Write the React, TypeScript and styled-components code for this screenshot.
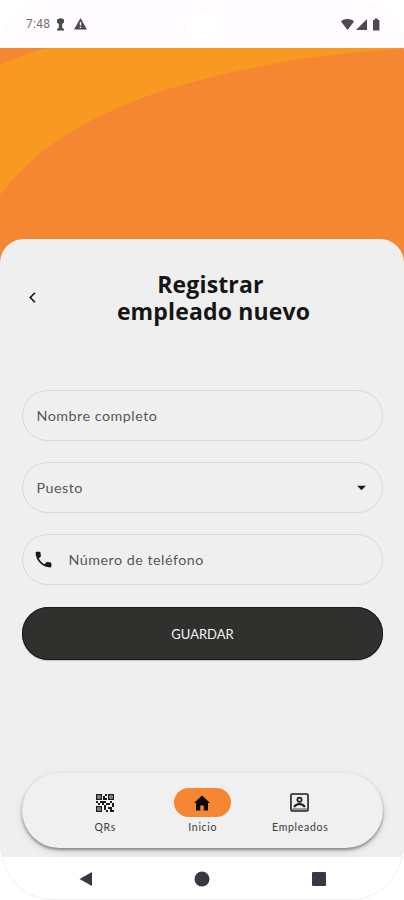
import React from 'react';
import styled, { createGlobalStyle } from 'styled-components';
import { MdPhone, MdArrowDropDown, MdQrCode2 } from 'react-icons/md';

const GlobalStyle = createGlobalStyle`
  *, *::before, *::after { box-sizing: border-box; }
  body { margin: 0; background: #ffffff; }
  button { font: inherit; margin: 0; padding: 0; border: 0; background: none; }
`;

const Device = styled.div`
  width: 404px;
  height: 900px;
  display: flex;
  flex-direction: column;
  overflow: hidden;
  border-radius: 56px 56px 52px 52px / 52px 52px 56px 56px;
  box-shadow: inset 0 0 0 1px #f1f0f1;
  background: #ffffff;
  font-family: Lato, sans-serif;
  color: #1c1c1c;
`;

const StatusBar = styled.header`
  flex: none;
  height: 48px;
  display: grid;
  grid-template-columns: 1fr 30px 1fr;
  align-items: center;
  background: #fffbff;
`;

const StatusLeft = styled.div`
  display: flex;
  align-items: center;
  padding-left: 26px;
  color: #4b4a4c;
`;

const Clock = styled.span`
  width: 30px;
  font: 400 12px/16px Roboto, sans-serif;
  letter-spacing: 0.3px;
  color: #747174;
`;

const Notifications = styled.div`
  display: flex;
  align-items: center;
  gap: 9px;
`;

const StatusRight = styled.div`
  display: flex;
  justify-content: flex-end;
  align-items: center;
  padding-right: 23px;
  color: #4b4a4c;
`;

const Camera = styled.div`
  width: 30px;
  height: 30px;
  margin-top: 6px;
  margin-left: 1px;
  border-radius: 50%;
  background: #ffffff;
`;

const Banner = styled.div`
  flex: none;
  height: 218px;
  background: #f68732;

  svg { display: block; }
`;

const Sheet = styled.main`
  flex: none;
  height: 618px;
  margin-top: -27px;
  padding: 31px 21px 0 22px;
  display: flex;
  flex-direction: column;
  border-radius: 24px 24px 0 0;
  background: #efefef;
  position: relative;
`;

const TitleRow = styled.div`
  height: 56px;
  display: grid;
  grid-template-columns: 22px 1fr;
  align-items: center;
`;

const BackButton = styled.button`
  width: 21px;
  height: 22px;
  margin-top: -2px;
  display: flex;
  align-items: center;
  justify-content: center;
  color: #111111;
`;

const Title = styled.h1`
  width: 210px;
  margin: 0;
  justify-self: center;
  text-align: center;
  white-space: pre-line;
  font: 700 23px/27px "Open Sans", sans-serif;
  letter-spacing: 0.15px;
  color: #151515;
`;

const Form = styled.form`
  display: flex;
  flex-direction: column;
  gap: 21px;
  margin-top: 64px;
`;

const Field = styled.div`
  height: 51px;
  padding: 0 10px 0 13px;
  display: flex;
  align-items: center;
  border: 1px solid #d7d7d7;
  border-radius: 26px;
`;

const FieldIcon = styled.span`
  width: 35px;
  display: flex;
  margin-left: -3px;
  color: #17171c;
`;

const Placeholder = styled.span`
  flex: 1;
  padding-left: 0.5px;
  font-size: 14.3px;
  line-height: 20px;
  letter-spacing: 0.5px;
  color: #575757;
`;

const SaveButton = styled.button`
  height: 53px;
  margin-top: 1px;
  border-radius: 27px;
  background: #30302e;
  box-shadow: inset 0 0 0 1px #1b1b1a, 0 1px 1px rgba(0, 0, 0, 0.2);
  && { font: 400 13px/18px Lato, sans-serif; }
  color: #f3f3f3;
`;

const TabBar = styled.nav`
  height: 75px;
  margin-top: 113px;
  padding: 15px 34px 0;
  display: grid;
  grid-template-columns: repeat(3, 97.5px);
  border-radius: 38px;
  background: #f0f0f0;
  box-shadow: 0 2px 3px rgba(0, 0, 0, 0.38), 0 3px 8px rgba(0, 0, 0, 0.12);
`;

const Tab = styled.button`
  display: flex;
  flex-direction: column;
  align-items: center;
`;

const TabIcon = styled.span<{ $active?: boolean }>`
  width: 57px;
  height: 29px;
  display: flex;
  align-items: center;
  justify-content: center;
  border-radius: 15px;
  background: ${(p) => (p.$active ? '#f68732' : 'transparent')};
  color: ${(p) => (p.$active ? '#0c0907' : '#1c1c1c')};
`;

const TabLabel = styled.span`
  margin-top: 3px;
  padding-left: 1px;
  font: 400 10.5px/14px Lato, sans-serif;
  letter-spacing: 0.7px;
  color: #3c3c3c;
`;

const SystemBar = styled.footer`
  flex: none;
  height: 43px;
  padding: 0 27px 0 28px;
  display: grid;
  grid-template-columns: repeat(3, 1fr);
  justify-items: center;
  align-items: center;
  color: #363844;
`;

const KeyholeIcon = () => (
  <svg width="9" height="13" viewBox="0 0 9 13" fill="currentColor">
    <path d="M4.500 0 8 1.500v3L6.200 6v4L8 11v1.500H1V11l1.800-1V6L1 4.500v-3z" />
  </svg>
);

const WarningIcon = () => (
  <svg width="13" height="12" viewBox="0 0 13 12" fill="currentColor">
    <path fillRule="evenodd" d="M6.5 0 13 11.5H0zM5.8 4v3.6h1.4V4zm0 4.7v1.4h1.4V8.7z" />
  </svg>
);

const StatusIcons = () => (
  <svg width="40" height="13" viewBox="0 0 40 13" fill="currentColor">
    <path d="M0 3.500C3.500.3 9.500.3 13 3.500L6.500 12z" />
    <path d="M26 1v11H15z" />
    <path d="M32 2H33.700V.5h3V2h1.700v10.500H32z" />
  </svg>
);

const HomeIcon = () => (
  <svg width="18" height="16" viewBox="0 0 18 16" fill="currentColor">
    <path d="M9 .5 17 8h-2v7.500h-4.300v-5H7.300v5H3V8H1z" />
  </svg>
);

const PortraitIcon = () => (
  <svg width="19" height="19" viewBox="0 0 18 18" fill="none" stroke="currentColor">
    <rect x=".9" y=".9" width="16.200" height="16.200" rx="1.300" strokeWidth="1.500" />
    <circle cx="9" cy="6.400" r="2" strokeWidth="1.600" />
    <path d="M4 13.400c1-2.100 2.900-3 5-3s4 .9 5 3" strokeWidth="2" />
    <path d="M2 15.200h14" strokeWidth=".8" />
  </svg>
);

const tabs = [
  { label: 'QRs', icon: <MdQrCode2 size={24} /> },
  { label: 'Inicio', icon: <HomeIcon />, active: true },
  { label: 'Empleados', icon: <PortraitIcon /> },
];

export default function App() {
  return (
    <Device>
      <GlobalStyle />
      <StatusBar>
        <StatusLeft>
          <Clock>7:48</Clock>
          <Notifications>
            <KeyholeIcon />
            <WarningIcon />
          </Notifications>
        </StatusLeft>
        <Camera />
        <StatusRight>
          <StatusIcons />
        </StatusRight>
      </StatusBar>
      <Banner>
        <svg width="404" height="218" viewBox="0 0 404 218">
          <path
            d="M0 17C14 10 30 4 50 0H404C384 2 360 4 340 6C285 11 224 25 165 42C90 67 37 98 0 147z"
            fill="#f89a22"
          />
        </svg>
      </Banner>
      <Sheet>
        <TitleRow>
          <BackButton aria-label="Volver">
            <svg width="7" height="11" viewBox="0 0 7 11" fill="none">
              <path d="M6 .8 1.300 5.500 6 10.200" stroke="currentColor" strokeWidth="1.600" />
            </svg>
          </BackButton>
          <Title>{'Registrar\u00a0\nempleado nuevo'}</Title>
        </TitleRow>
        <Form>
          <Field>
            <Placeholder>Nombre completo</Placeholder>
          </Field>
          <Field>
            <Placeholder>Puesto</Placeholder>
            <MdArrowDropDown size={21} color="#17171c" />
          </Field>
          <Field>
            <FieldIcon>
              <MdPhone size={21} />
            </FieldIcon>
            <Placeholder>Número de teléfono</Placeholder>
          </Field>
          <SaveButton type="button">GUARDAR</SaveButton>
        </Form>
        <TabBar>
          {tabs.map((tab) => (
            <Tab key={tab.label}>
              <TabIcon $active={tab.active}>{tab.icon}</TabIcon>
              <TabLabel>{tab.label}</TabLabel>
            </Tab>
          ))}
        </TabBar>
      </Sheet>
      <SystemBar>
        <svg width="14" height="16" viewBox="0 0 14 16">
          <path d="M13 1v14L.5 8z" fill="currentColor" />
        </svg>
        <svg width="16" height="16" viewBox="0 0 16 16">
          <circle cx="8" cy="8" r="7.500" fill="currentColor" />
        </svg>
        <svg width="14" height="14" viewBox="0 0 14 14">
          <rect width="14" height="14" rx="1" fill="currentColor" />
        </svg>
      </SystemBar>
    </Device>
  );
}
